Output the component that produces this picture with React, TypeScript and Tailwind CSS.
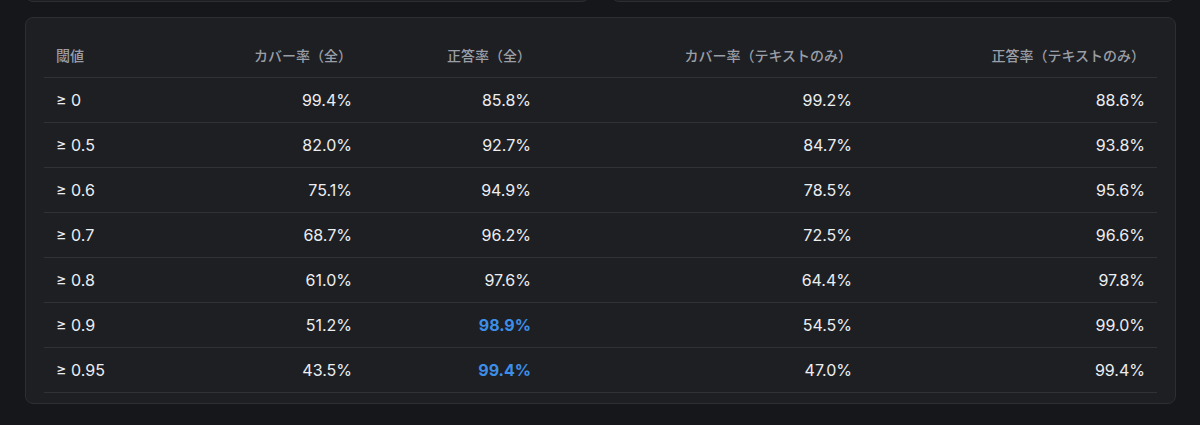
const rows: [string, string, string, string, string, boolean][] = [
  ["≥ 0", "99.4%", "85.8%", "99.2%", "88.6%", false],
  ["≥ 0.5", "82.0%", "92.7%", "84.7%", "93.8%", false],
  ["≥ 0.6", "75.1%", "94.9%", "78.5%", "95.6%", false],
  ["≥ 0.7", "68.7%", "96.2%", "72.5%", "96.6%", false],
  ["≥ 0.8", "61.0%", "97.6%", "64.4%", "97.8%", false],
  ["≥ 0.9", "51.2%", "98.9%", "54.5%", "99.0%", true],
  ["≥ 0.95", "43.5%", "99.4%", "47.0%", "99.4%", true],
];

const head = "px-3 pb-[10px] text-right font-medium";

export default function App() {
  return (
    <div
      className="w-[1200px] h-[425px] bg-[#16171a] overflow-hidden"
      style={{ fontFamily: 'Inter, "Noto Sans CJK JP", sans-serif' }}
    >
      <div className="flex gap-[21px] px-[25px] -mt-[40px] h-[42px]">
        <div className="flex-1 rounded-b-lg border border-[#2c2e33] bg-[#1e1f23]"></div>
        <div className="flex-1 rounded-b-lg border border-[#2c2e33] bg-[#1e1f23]"></div>
      </div>
      <div className="mx-[25px] mt-[15px] w-[1151px] rounded-lg border border-[#2c2e33] bg-[#1e1f23] px-[18px] pt-[26px] pb-[10px]">
        <table className="w-full table-fixed border-collapse">
          <colgroup>
            <col className="w-[160px]" />
            <col className="w-[160px]" />
            <col className="w-[179px]" />
            <col className="w-[321px]" />
            <col />
          </colgroup>
          <thead>
            <tr className="border-b border-[#303238] text-[14px] text-[#9a9ea6] h-[33px] font-['Noto_Sans_CJK_JP',sans-serif]">
              <th className="px-3 pb-[10px] text-left font-medium">閾値</th>
              <th className={head}>カバー率（全）</th>
              <th className={head}>正答率（全）</th>
              <th className={head}>カバー率（テキストのみ）</th>
              <th className={head}>正答率（テキストのみ）</th>
            </tr>
          </thead>
          <tbody>
            {rows.map(([t, a, b, c, d, hi]) => (
              <tr key={t} className="h-[45px] border-b border-[#303238] text-[16px] text-[#eceef1]">
                <td className="px-3 text-left">{t}</td>
                <td className="px-3 text-right">{a}</td>
                <td className={hi ? "px-3 text-right font-bold text-[#3d8ee8]" : "px-3 text-right"}>{b}</td>
                <td className="px-3 text-right">{c}</td>
                <td className="px-3 text-right">{d}</td>
              </tr>
            ))}
          </tbody>
        </table>
      </div>
    </div>
  );
}
